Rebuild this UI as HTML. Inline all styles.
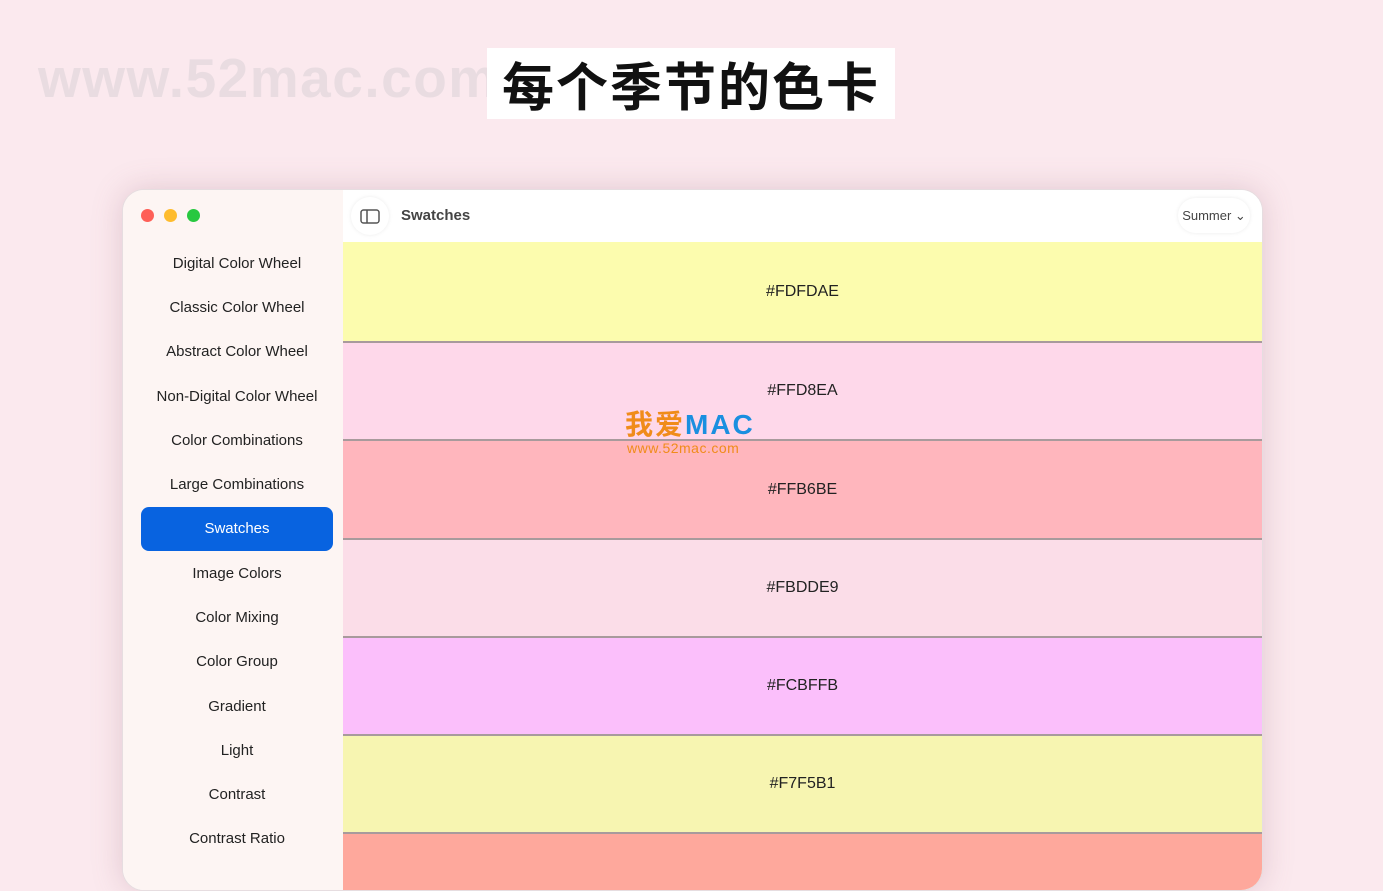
<!DOCTYPE html><html><head><meta charset="utf-8"><style>
body{margin:0;width:1383px;height:864px;overflow:hidden;background:#fbe9ee;font-family:"Liberation Sans","Noto Sans CJK SC",sans-serif;position:relative}
.wm{position:absolute;left:38px;top:46px;font-size:55px;font-weight:bold;color:#e9dce1;letter-spacing:1.5px}
.title{position:absolute;left:487px;top:48px;width:408px;height:71px;background:#fff;font-size:52px;font-weight:bold;line-height:71px;text-align:center;color:#111;font-family:"Noto Sans CJK SC",sans-serif;letter-spacing:2px}
.win{position:absolute;left:122px;top:189px;width:1139px;height:700px;border-radius:22px;overflow:hidden;background:#fff;box-shadow:0 0 30px rgba(150,100,120,.25);border:1px solid #e6dde0}
.side{position:absolute;left:0;top:0;width:220px;height:100%;background:#fdf5f3}
.dot{position:absolute;top:19px;width:13px;height:13px;border-radius:50%}
.item{position:absolute;left:18px;width:192px;height:44px;line-height:44px;text-align:center;font-size:15px;color:#222}
.sel{background:#0863e0;color:#fff;border-radius:8px}
.tb{position:absolute;left:220px;top:0;right:0;height:51px;background:#fff}
.sw{position:absolute;left:220px;right:0;text-align:center;font-size:16px;color:#222;border-bottom:2px solid #a89a9c;box-sizing:border-box}
</style></head><body>
<div class="wm">www.52mac.com</div>
<div class="title">每个季节的色卡</div>
<div class="win">
<div class="side">
<div class="dot" style="left:18px;background:#fe5f57"></div>
<div class="dot" style="left:41px;background:#febc2e"></div>
<div class="dot" style="left:64px;background:#28c840"></div>
<div class="item" style="top:52px">Digital Color Wheel</div>
<div class="item" style="top:96px">Classic Color Wheel</div>
<div class="item" style="top:140px">Abstract Color Wheel</div>
<div class="item" style="top:185px">Non-Digital Color Wheel</div>
<div class="item" style="top:229px">Color Combinations</div>
<div class="item" style="top:273px">Large Combinations</div>
<div class="item sel" style="top:317px">Swatches</div>
<div class="item" style="top:362px">Image Colors</div>
<div class="item" style="top:406px">Color Mixing</div>
<div class="item" style="top:450px">Color Group</div>
<div class="item" style="top:495px">Gradient</div>
<div class="item" style="top:539px">Light</div>
<div class="item" style="top:583px">Contrast</div>
<div class="item" style="top:627px">Contrast Ratio</div>
</div>
<div class="tb">
<div style="position:absolute;left:8px;top:7px;width:38px;height:38px;border-radius:50%;background:#fff;box-shadow:0 0 4px rgba(0,0,0,.08)">
<svg width="38" height="38" viewBox="0 0 38 38"><rect x="10" y="13" width="18" height="13" rx="2.5" fill="none" stroke="#555" stroke-width="1.5"/><line x1="16" y1="13" x2="16" y2="26" stroke="#555" stroke-width="1.5"/></svg></div>
<div style="position:absolute;left:58px;top:17px;font-size:15px;font-weight:bold;color:#444">Swatches</div>
<div style="position:absolute;right:12px;top:8px;width:72px;height:35px;border-radius:18px;background:#fff;box-shadow:0 0 4px rgba(0,0,0,.08);font-size:13px;line-height:35px;text-align:center;color:#444">Summer ⌄</div>
</div>
<div class="sw" style="top:52px;height:101px;line-height:99px;background:#fcfcae">#FDFDAE</div>
<div class="sw" style="top:153px;height:98px;line-height:96px;background:#fed8ea">#FFD8EA</div>
<div class="sw" style="top:251px;height:99px;line-height:97px;background:#ffb6bd">#FFB6BE</div>
<div class="sw" style="top:350px;height:98px;line-height:96px;background:#fbdde8">#FBDDE9</div>
<div class="sw" style="top:448px;height:98px;line-height:96px;background:#fbbffb">#FCBFFB</div>
<div class="sw" style="top:546px;height:98px;line-height:96px;background:#f7f5b1">#F7F5B1</div>
<div class="sw" style="top:644px;height:100px;background:#fea89c;border:none"></div>
</div>
<div style="position:absolute;left:625px;top:408px;font-size:28px;font-weight:bold;line-height:30px;letter-spacing:2px"><span style="color:#f08c1a;font-family:'Noto Sans CJK SC',sans-serif">我爱</span><span style="color:#1a8fe0">MAC</span></div>
<div style="position:absolute;left:627px;top:440px;font-size:14px;color:#f08c1a;letter-spacing:0.5px">www.52mac.com</div>
</body></html>
